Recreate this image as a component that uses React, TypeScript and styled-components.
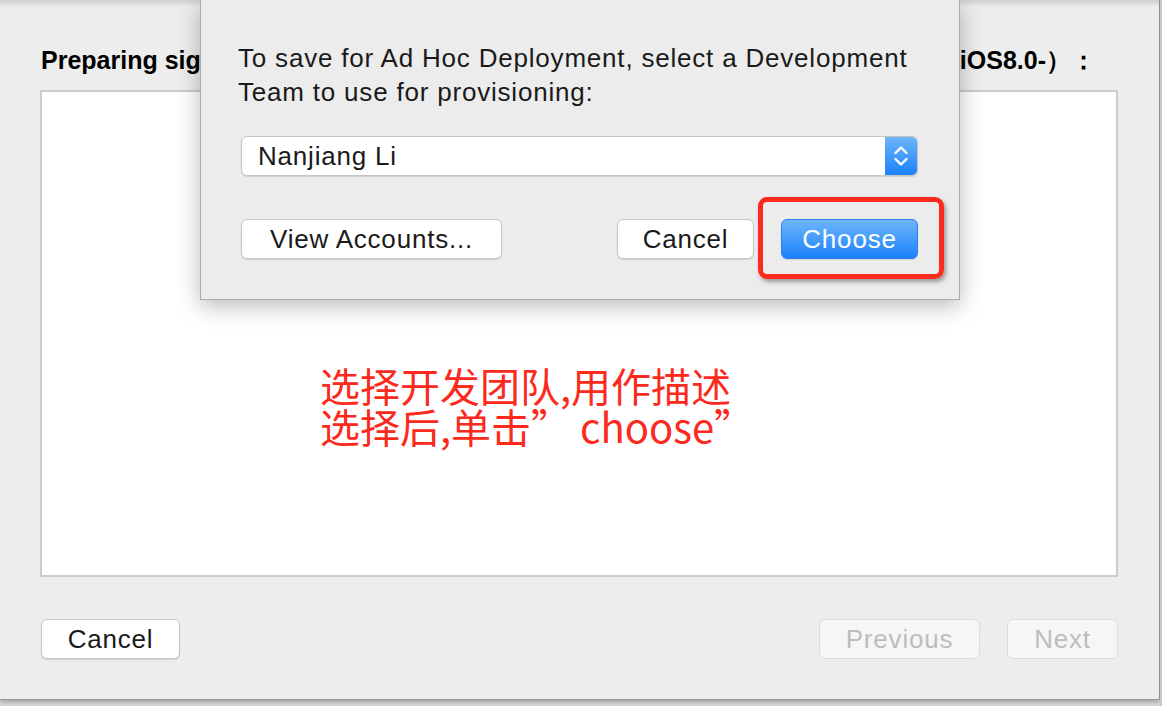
import React from "react";
import styled, { createGlobalStyle } from "styled-components";

const Global = createGlobalStyle`
  html, body { margin: 0; padding: 0; }
  body {
    width: 1162px;
    height: 706px;
    overflow: hidden;
    background: #d2d2d2;
    font-family: "Liberation Sans", Arial, sans-serif;
  }
`;

const Stage = styled.div`
  position: relative;
  width: 1162px;
  height: 706px;
  background: linear-gradient(#cfcfcf, #d8d8d8);
`;

const Window = styled.div`
  position: relative;
  width: 1160px;
  height: 700px;
  box-sizing: border-box;
  background: #ededed;
  border-right: 1px solid #8f8f8f;
  border-bottom: 1px solid #9a9a9a;
  box-shadow: 0 2px 4px rgba(0, 0, 0, 0.25);
  padding: 45px 41px 0 40px;
  display: flex;
  flex-direction: column;
  &::before {
    content: "";
    position: absolute;
    left: 0;
    right: 0;
    top: 0;
    height: 7px;
    background: linear-gradient(rgba(0, 0, 0, 0.13), rgba(0, 0, 0, 0));
  }
`;

const Heading = styled.div`
  display: flex;
  justify-content: space-between;
  height: 30px;
  line-height: 30px;
  font-size: 25px;
  font-weight: bold;
  color: #000;
  padding: 0 22px 0 1px;
  margin-bottom: 15px;
  white-space: nowrap;
`;

const ContentBox = styled.div`
  height: 487px;
  box-sizing: border-box;
  background: #fff;
  border: 2px solid #cccccc;
  padding: 273px 0 0 278px;
`;

const Note = styled.div`
  font-family: "Noto Sans CJK SC", "Liberation Sans", sans-serif;
  font-size: 40px;
  line-height: 41px;
  color: #fb2a1c;
  white-space: nowrap;
`;

const Footer = styled.div`
  display: flex;
  align-items: center;
  margin-top: 42px;
  gap: 27px;
  padding-left: 1px;
`;

const Spacer = styled.div`
  flex: 1;
`;

const Button = styled.button<{ $w: number; $disabled?: boolean; $primary?: boolean }>`
  width: ${(p) => p.$w}px;
  height: 40px;
  box-sizing: border-box;
  border-radius: 6px;
  font-family: "Liberation Sans", Arial, sans-serif;
  font-size: 26px;
  letter-spacing: 0.8px;
  padding: 0;
  cursor: default;
  border: 1px solid ${(p) => (p.$primary ? "#2a80f0" : p.$disabled ? "#dcdcdc" : "#c6c6c6")};
  background: ${(p) =>
    p.$primary
      ? "linear-gradient(#6db5fb, #1b82fc)"
      : p.$disabled
      ? "#f6f6f6"
      : "#ffffff"};
  color: ${(p) => (p.$primary ? "#ffffff" : p.$disabled ? "#bdbdbd" : "#1a1a1a")};
  box-shadow: ${(p) => (p.$disabled ? "none" : "0 1px 1px rgba(0,0,0,0.12)")};
`;

const Sheet = styled.div`
  position: absolute;
  left: 200px;
  top: 0;
  width: 760px;
  height: 300px;
  box-sizing: border-box;
  background: #ececec;
  border: 1px solid #a9a9a9;
  border-top: none;
  box-shadow: 0 6px 22px rgba(0, 0, 0, 0.28);
  padding: 41px 41px 0 40px;
  display: flex;
  flex-direction: column;
`;

const SheetText = styled.div`
  font-size: 26px;
  letter-spacing: 0.8px;
  line-height: 34px;
  color: #1a1a1a;
  margin-left: -3px;
  white-space: nowrap;
`;

const Popup = styled.div`
  margin-top: 27px;
  height: 40px;
  box-sizing: border-box;
  display: flex;
  border: 1px solid #c6c6c6;
  border-radius: 6px;
  background: #fff;
  box-shadow: 0 1px 1px rgba(0, 0, 0, 0.12);
  overflow: hidden;
`;

const PopupLabel = styled.div`
  flex: 1;
  font-size: 26px;
  letter-spacing: 0.8px;
  line-height: 38px;
  padding-left: 16px;
  color: #1a1a1a;
`;

const Stepper = styled.div`
  width: 32px;
  background: linear-gradient(#6db5fb, #1b82fc);
  display: flex;
  align-items: center;
  justify-content: center;
`;

const SheetButtons = styled.div`
  margin-top: 43px;
  display: flex;
  gap: 27px;
`;

const Highlight = styled.div`
  position: absolute;
  left: 557px;
  top: 197px;
  width: 186px;
  height: 82px;
  box-sizing: border-box;
  border: 5px solid #fb2a1c;
  border-radius: 9px;
  box-shadow: 2px 3px 4px rgba(0, 0, 0, 0.35);
`;

const RightEdge = styled.div`
  position: absolute;
  right: 0;
  top: 0;
  width: 2px;
  height: 706px;
  background: #c8c8c8;
`;

export default function App() {
  return (
    <>
      <Global />
      <Stage>
        <Window>
          <Heading>
            <span>Preparing signing identities</span>
            <span>（iOS8.0-）：</span>
          </Heading>
          <ContentBox>
            <Note>
              选择开发团队,用作描述
              <br />
              选择后,单击”&nbsp;choose”
            </Note>
          </ContentBox>
          <Footer>
            <Button $w={139}>Cancel</Button>
            <Spacer />
            <Button $w={161} $disabled>
              Previous
            </Button>
            <Button $w={111} $disabled>
              Next
            </Button>
          </Footer>
        </Window>
        <RightEdge />
        <Sheet>
          <SheetText>
            To save for Ad Hoc Deployment, select a Development
            <br />
            Team to use for provisioning:
          </SheetText>
          <Popup>
            <PopupLabel>Nanjiang Li</PopupLabel>
            <Stepper>
              <svg width="18" height="28" viewBox="0 0 18 28" fill="none">
                <path d="M3.5 11 L9 5.5 L14.5 11" stroke="#fff" strokeWidth="2.4" strokeLinecap="round" strokeLinejoin="round" />
                <path d="M3.5 17 L9 22.5 L14.5 17" stroke="#fff" strokeWidth="2.4" strokeLinecap="round" strokeLinejoin="round" />
              </svg>
            </Stepper>
          </Popup>
          <SheetButtons>
            <Button $w={261}>View Accounts...</Button>
            <Spacer />
            <Button $w={137}>Cancel</Button>
            <Button $w={137} $primary>
              Choose
            </Button>
          </SheetButtons>
          <Highlight />
        </Sheet>
      </Stage>
    </>
  );
}
